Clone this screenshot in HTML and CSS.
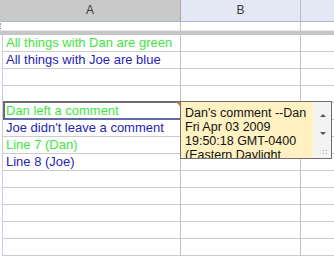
FILE: index.html
```html
<!DOCTYPE html>
<html lang="en">
<head>
  <meta charset="UTF-8" />
  <title>Spreadsheet - Comments</title>
  <link rel="stylesheet" href="styles.css">
</head>
<body>

  <div class="sheet">

    <!-- Column headers -->
    <div class="col-heads">
      <div class="ch ch-a">A</div>
      <div class="ch ch-b">B</div>
      <div class="ch ch-c"></div>
    </div>

    <!-- Frozen row bar -->
    <div class="freeze">
      <div class="fz fz-a"><span class="grip"></span></div>
      <div class="fz fz-b"></div>
      <div class="fz fz-c"></div>
    </div>

    <!-- Cells -->
    <div class="grid">
      <div class="row"><div class="cell a green">All things with Dan are green</div><div class="cell b"></div><div class="cell c"></div></div>
      <div class="row"><div class="cell a blue">All things with Joe are blue</div><div class="cell b"></div><div class="cell c"></div></div>
      <div class="row"><div class="cell a"></div><div class="cell b"></div><div class="cell c"></div></div>
      <div class="row"><div class="cell a"></div><div class="cell b"></div><div class="cell c"></div></div>
      <div class="row">
        <div class="cell a green selected">Dan left a comment<span class="note-mark"></span></div>
        <div class="cell b">
          <div class="comment">
            <div class="comment-text">Dan's comment --Dan Fri Apr 03 2009 19:50:18 GMT-0400 (Eastern Daylight Time)</div>
            <div class="comment-scroll">
              <span class="arr up"></span>
              <span class="arr down"></span>
              <span class="resize"></span>
            </div>
          </div>
        </div>
        <div class="cell c"></div>
      </div>
      <div class="row"><div class="cell a blue">Joe didn't leave a comment</div><div class="cell b"></div><div class="cell c"></div></div>
      <div class="row"><div class="cell a green">Line 7 (Dan)</div><div class="cell b"></div><div class="cell c"></div></div>
      <div class="row"><div class="cell a blue">Line 8 (Joe)</div><div class="cell b"></div><div class="cell c"></div></div>
      <div class="row"><div class="cell a"></div><div class="cell b"></div><div class="cell c"></div></div>
      <div class="row"><div class="cell a"></div><div class="cell b"></div><div class="cell c"></div></div>
      <div class="row"><div class="cell a"></div><div class="cell b"></div><div class="cell c"></div></div>
      <div class="row"><div class="cell a"></div><div class="cell b"></div><div class="cell c"></div></div>
      <div class="row"><div class="cell a"></div><div class="cell b"></div><div class="cell c"></div></div>
    </div>

  </div>

</body>
</html>
```

FILE: styles.css
```css
body {
  margin: 0;
  background: #fff;
  font-family: "Liberation Sans", Arial, sans-serif;
}

.sheet {
  width: 334px;
  height: 270px;
  overflow: hidden;
}

/* column headers */
.col-heads {
  display: flex;
  height: 21px;
  border-bottom: 1px solid #a9b6d2;
}

.ch {
  font-size: 12px;
  line-height: 21px;
  text-align: center;
  color: #3a3a3a;
  background: #e3e8f4;
  border-right: 1px solid #b3bcd2;
}

.ch-a {
  width: 180px;
  background: #c9c9c9;
  border-right-color: #a8a8a8;
}

.ch-b { width: 119px; }
.ch-c { flex: 1; border-right: none; }

/* frozen row divider */
.freeze {
  display: flex;
  height: 9px;
  border-bottom: 4px solid #c6c6c6;
  box-shadow: inset 0 -1px 0 #e8e8e8;
}

.fz {
  border-right: 1px solid #c4c4c4;
}

.fz-a { width: 180px; }
.fz-b { width: 119px; }
.fz-c { flex: 1; border-right: none; }

.grip {
  display: block;
  width: 2px;
  height: 6px;
  margin-top: 1px;
  border-left: 1px dotted #9a9a9a;
}

/* cells */
.grid {
  margin-left: 2px;
  border-left: 1px solid #c6cbe9;
  height: 221px;
}

.row {
  display: flex;
  height: 16px;
  border-bottom: 1px solid #cbcbcb;
}

.cell {
  font-size: 13px;
  line-height: 16px;
  white-space: nowrap;
  border-right: 1px solid #c2c2c2;
  box-sizing: border-box;
}

.cell.a {
  width: 178px;
  padding-left: 3px;
}

.cell.b { width: 120px; position: relative; }
.cell.c { flex: 1; border-right: none; }

.green { color: #40e640; }
.blue { color: #2525b4; }

.selected {
  position: relative;
}

.selected::after {
  content: "";
  position: absolute;
  left: 0;
  top: -2px;
  right: -2px;
  bottom: -1px;
  border: 2px solid #6c6c6c;
  border-bottom-color: #5d6aa6;
}

.note-mark {
  position: absolute;
  right: -1px;
  top: -1px;
  width: 0;
  height: 0;
  border-top: 5px solid #c27a2c;
  border-left: 5px solid transparent;
  z-index: 2;
}

/* comment popup */
.comment {
  position: absolute;
  left: -1px;
  top: -2px;
  width: 150px;
  height: 56px;
  display: flex;
  background: #fff1c2;
  border: 1px solid #6f6f6f;
  z-index: 3;
  overflow: hidden;
}

.comment-text {
  flex: 1;
  min-width: 0;
  padding: 4px 0 0 4px;
  font-size: 12.5px;
  line-height: 14px;
  color: #111;
  white-space: normal;
  overflow: hidden;
}

.comment-scroll {
  flex: none;
  width: 17px;
  background: #f3f3f1;
  border-left: 1px solid #f8f8f8;
  position: relative;
}

.arr {
  position: absolute;
  left: 6px;
  width: 0;
  height: 0;
  border-left: 3px solid transparent;
  border-right: 3px solid transparent;
}

.arr.up {
  top: 12px;
  border-bottom: 3px solid #555;
}

.arr.down {
  top: 30px;
  border-top: 3px solid #555;
}

.resize {
  position: absolute;
  right: 2px;
  bottom: 2px;
  width: 7px;
  height: 7px;
  background: radial-gradient(circle, #9a9a9a 0.6px, transparent 0.9px) 0 0 / 3px 3px;
}
```
